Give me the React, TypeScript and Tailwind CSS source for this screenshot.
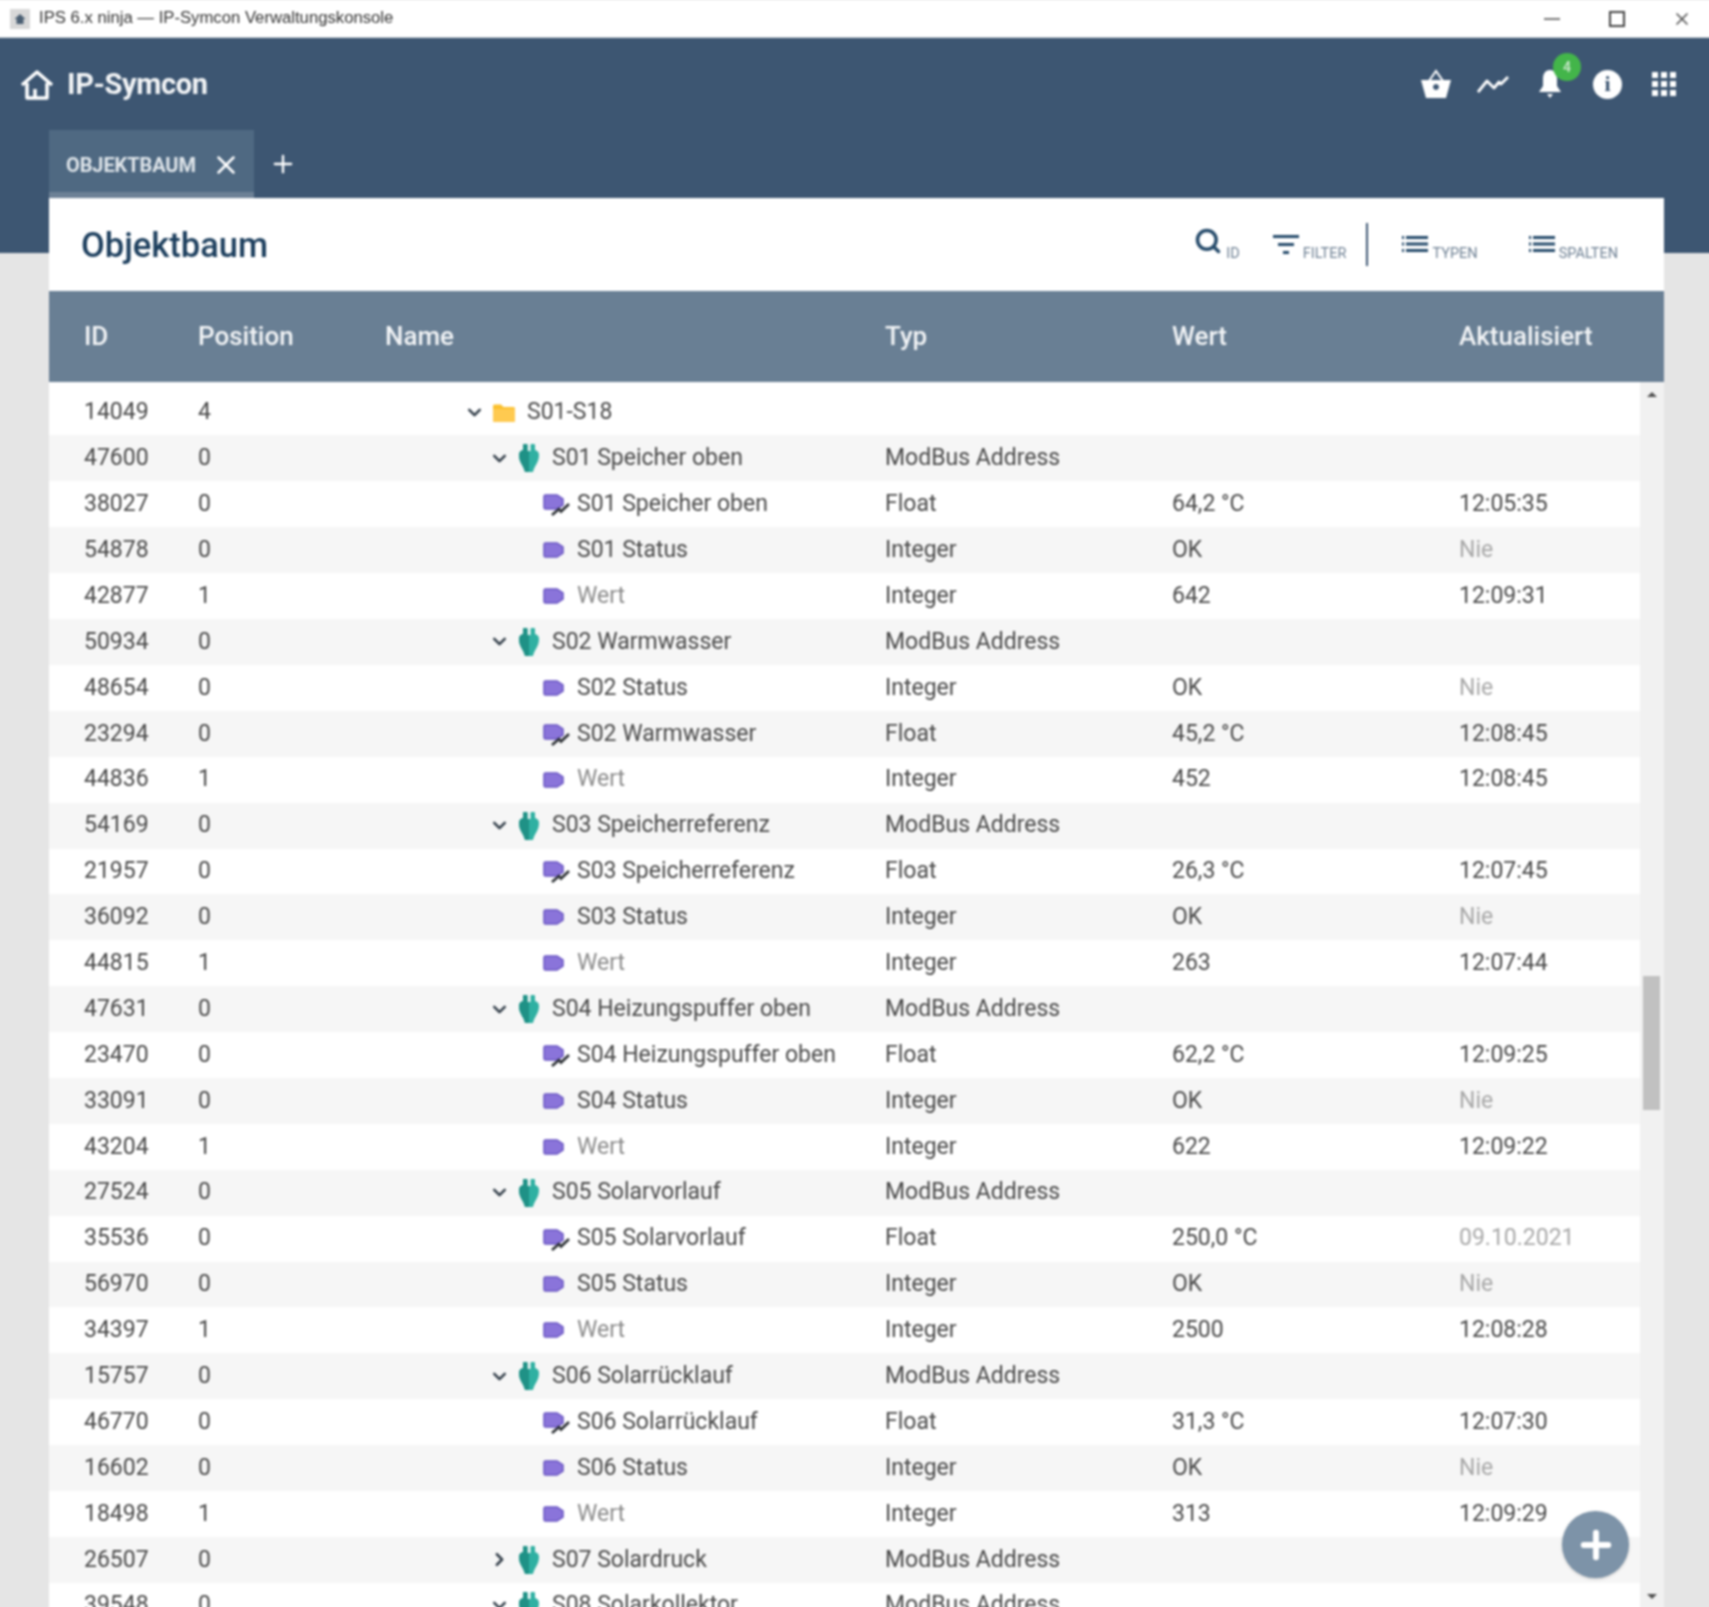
import React from "react";
import { ChevronDown, ChevronRight, X, Plus, Search } from "lucide-react";

type Row = { id: string; pos: string; lvl: 0 | 1 | 2; icon: "folder" | "mod" | "tag" | "var"; open?: boolean; name: string; typ?: string; wert?: string; upd?: string };

const rows: Row[] = [
  { id: "14049", pos: "4", lvl: 0, icon: "folder", open: true, name: "S01-S18" },
];
function group(id: string, name: string, open: boolean = true) {
  rows.push({ id, pos: "0", lvl: 1, icon: "mod", open, name, typ: "ModBus Address" });
}
function fl(id: string, name: string, wert: string, upd: string) {
  rows.push({ id, pos: "0", lvl: 2, icon: "var", name, typ: "Float", wert, upd });
}
function st(id: string, name: string) {
  rows.push({ id, pos: "0", lvl: 2, icon: "tag", name, typ: "Integer", wert: "OK", upd: "Nie" });
}
function we(id: string, wert: string, upd: string) {
  rows.push({ id, pos: "1", lvl: 2, icon: "tag", name: "Wert", typ: "Integer", wert, upd });
}
group("47600", "S01 Speicher oben"); fl("38027", "S01 Speicher oben", "64,2 °C", "12:05:35"); st("54878", "S01 Status"); we("42877", "642", "12:09:31");
group("50934", "S02 Warmwasser"); st("48654", "S02 Status"); fl("23294", "S02 Warmwasser", "45,2 °C", "12:08:45"); we("44836", "452", "12:08:45");
group("54169", "S03 Speicherreferenz"); fl("21957", "S03 Speicherreferenz", "26,3 °C", "12:07:45"); st("36092", "S03 Status"); we("44815", "263", "12:07:44");
group("47631", "S04 Heizungspuffer oben"); fl("23470", "S04 Heizungspuffer oben", "62,2 °C", "12:09:25"); st("33091", "S04 Status"); we("43204", "622", "12:09:22");
group("27524", "S05 Solarvorlauf"); fl("35536", "S05 Solarvorlauf", "250,0 °C", "09.10.2021"); st("56970", "S05 Status"); we("34397", "2500", "12:08:28");
group("15757", "S06 Solarrücklauf"); fl("46770", "S06 Solarrücklauf", "31,3 °C", "12:07:30"); st("16602", "S06 Status"); we("18498", "313", "12:09:29");
group("26507", "S07 Solardruck", false);
group("39548", "S08 Solarkollektor");

const lvlClass = { 0: "pl-[80px]", 1: "pl-[105px]", 2: "pl-[158px]" };

function FolderIcon() {
  return (
    <svg width="22" height="18" viewBox="0 0 22 18" className="shrink-0">
      <path d="M0 2 a1.5 1.5 0 0 1 1.5-1.5 H8 L10.5 3 H20.5 A1.5 1.5 0 0 1 22 4.5 V16.5 A1.5 1.5 0 0 1 20.5 18 H1.5 A1.5 1.5 0 0 1 0 16.5 Z" fill="#fbc02d" />
      <path d="M0 5 H22 V16.5 A1.5 1.5 0 0 1 20.5 18 H1.5 A1.5 1.5 0 0 1 0 16.5 Z" fill="#ffca50" />
    </svg>
  );
}
function ModIcon() {
  return (
    <svg width="22" height="28" viewBox="0 0 22 28" className="shrink-0">
      <path d="M5 1 Q5 0 6 0 H8.500 Q9.500 0 9.500 1 V7 H12.500 V1 Q12.500 0 13.500 0 H16 Q17 0 17 1 V6 Q21 7 21 11 C21 19 16 22 15 28 H7 C6 22 1 19 1 11 Q1 7 5 6 Z" fill="#2fb0a2" />
      <path d="M5 1 Q5 0 6 0 H8.500 Q9.500 0 9.500 1 V7 H11 V28 H7 C6 22 1 19 1 11 Q1 7 5 6 Z" fill="#1f9186" />
    </svg>
  );
}
function TagIcon() {
  return (
    <svg width="21" height="16" viewBox="0 0 21 16" className="shrink-0">
      <path d="M2.500 1 H14 L20 5 V11 L14 15 H2.500 A1.500 1.500 0 0 1 1 13.500 V2.500 A1.500 1.500 0 0 1 2.500 1 Z" fill="#8a74da" stroke="#6a55c2" strokeWidth="1.500" />
    </svg>
  );
}
function VarIcon() {
  return (
    <svg width="28" height="24" viewBox="0 0 28 24" className="shrink-0 -mr-[6px] translate-y-[2px]">
      <path d="M2.500 1 H14 L20 5 V11 L14 15 H2.500 A1.500 1.500 0 0 1 1 13.500 V2.500 A1.500 1.500 0 0 1 2.500 1 Z" fill="#8a74da" stroke="#6a55c2" strokeWidth="1.500" />
      <path d="M9 21 L16 15 L18 17.500 L26 10" fill="none" stroke="#2c3035" strokeWidth="2.600" />
    </svg>
  );
}
function ListIcon() {
  return (
    <svg width="26" height="16" viewBox="0 0 26 16" className="shrink-0">
      <path d="M0 0 H2 V3 H0 Z M0 6.500 H2 V9.500 H0 Z M0 13 H2 V16 H0 Z" fill="#264b6b" />
      <path d="M4 0 H26 V3 H4 Z M4 6.500 H26 V9.500 H4 Z M4 13 H26 V16 H4 Z" fill="#264b6b" />
    </svg>
  );
}

function Tool({ icon, label, cls }: { icon: React.ReactNode; label: string; cls: string }) {
  return (
    <div className={`flex items-start ${cls}`}>
      {icon}
      <span className="mt-[19px] ml-[4px] text-[14.5px] leading-[16px] text-[#6f8194]">{label}</span>
    </div>
  );
}

export default function App() {
  return (
    <div className="h-[1607px] overflow-hidden bg-[#e5e5e5]">
      <div className="-mx-[3px] h-[1615px] overflow-hidden bg-[#e5e5e5] font-['Roboto',sans-serif] blur-[0.8px]">
        {/* window title bar */}
        <div className="flex h-[38px] items-center bg-white pl-[13px] border-b border-[#c9d0d6]">
          <div className="flex h-[20px] w-[20px] items-center justify-center bg-[#d8d8d8]">
            <svg width="12" height="12" viewBox="0 0 24 24"><path d="M12 2 L23 12 H19 V22 H5 V12 H1 Z" fill="#4b5f73" /></svg>
          </div>
          <span className="ml-[9px] -mt-[1px] font-['Liberation_Sans',sans-serif] text-[16.7px] text-[#333]">IPS 6.x ninja — IP-Symcon Verwaltungskonsole</span>
          <div className="ml-auto flex items-center text-[#555]">
            <div className="mr-[49px] h-[2px] w-[16px] bg-[#777]" />
            <div className="mr-[47px] h-[16px] w-[16px] border-2 border-[#444]" />
            <X size={20} strokeWidth={2} className="mr-[20px]" />
          </div>
        </div>

        {/* app header */}
        <div className="h-[215px] bg-[#3d5672]">
          <div className="flex h-[92px] items-center pl-[23px]">
            <svg width="34" height="31" viewBox="0 0 34 31" fill="none" stroke="white" strokeWidth="3.500" strokeLinejoin="round">
              <path d="M2 16 L17 3 L32 16" />
              <path d="M7 14 V29 H15 V20 M27 14 V29 H15" />
            </svg>
            <span className="ml-[13px] mt-[1px] text-[29px] font-bold tracking-[-0.35px] text-[#f2f4f6]">IP-Symcon</span>
            <div className="ml-auto mr-[36px] flex items-center">
              <svg width="32" height="30" viewBox="0 0 32 30" className="-ml-[1px]">
                <path d="M1 11 H31 L26 29 H6 Z M16 15 a3 3 0 1 0 .01 0 Z" fill="white" fillRule="evenodd" />
                <path d="M9 12 L16 2 L23 12" fill="none" stroke="white" strokeWidth="2" />
              </svg>
              <svg width="32" height="20" viewBox="0 0 32 20" fill="none" stroke="white" strokeWidth="2.800" strokeLinejoin="round" className="ml-[25px]">
                <path d="M1 18 L10 7 L17 14 L22 8 L24 10 L31 3" />
              </svg>
              <div className="relative ml-[29px] w-[24px]">
                <svg width="24" height="30" viewBox="0 0 24 30">
                  <path d="M12 1 C7 1 5 5 5 10 V17 L1 23 H23 L19 17 V10 C19 5 17 1 12 1 Z" fill="white" />
                  <path d="M9 25 H15 L12 29 Z" fill="white" />
                </svg>
                <div className="absolute -top-[16px] left-[15px] flex h-[28px] w-[28px] items-center justify-center rounded-full bg-[#43b54a] text-[14px] font-medium text-[#cfe9cf]">4</div>
              </div>
              <div className="ml-[31px] flex h-[29px] w-[29px] items-center justify-center rounded-full bg-white font-['Liberation_Serif',serif] text-[22px] font-bold leading-none text-[#3d5672]">i</div>
              <div className="ml-[30px] grid grid-cols-3 gap-[3px]">
                {Array.from({ length: 9 }).map((_, i) => (
                  <div key={i} className="h-[6px] w-[6px] bg-white" />
                ))}
              </div>
            </div>
          </div>
          <div className="flex pl-[52px]">
            <div className="flex h-[68px] w-[205px] items-center border-b-[6px] border-[#6d8196] bg-[#4f6982] pl-[17px] pt-[8px]">
              <span className="text-[20px] font-bold text-[#dfe5ea] tracking-[-0.1px]">OBJEKTBAUM</span>
              <X size={30} strokeWidth={2} className="ml-[15px] text-white" />
            </div>
            <Plus size={28} strokeWidth={2} className="ml-[15px] mt-[20px] text-white" />
          </div>
        </div>

        {/* card */}
        <div className="relative mr-[48px] -mt-[55px] ml-[52px] bg-white">
          <div className="flex h-[93px] items-center pl-[32px]">
            <span className="mt-[3px] text-[34.5px] font-medium text-[#1d3f5e]">Objektbaum</span>
            <div className="ml-auto flex h-[44px] items-center self-center">
              <Tool cls="" label="ID" icon={<Search size={28} strokeWidth={3} className="text-[#264b6b]" />} />
              <Tool cls="ml-[33px]" label="FILTER" icon={
                <svg width="26" height="20" viewBox="0 0 26 20" className="mt-[8px]"><path d="M0 0 H26 V3 H0 Z M5 8 H21 V11 H5 Z M10 16 H16 V19 H10 Z" fill="#264b6b" /></svg>
              } />
              <div className="ml-[20px] h-[43px] w-[2px] bg-[#3d5672]" />
              <Tool cls="ml-[34px]" label="TYPEN" icon={<div className="mt-[9px]"><ListIcon /></div>} />
              <Tool cls="ml-[51px] mr-[46px]" label="SPALTEN" icon={<div className="mt-[9px]"><ListIcon /></div>} />
            </div>
          </div>
          <div className="grid h-[91px] grid-cols-[114px_187px_500px_287px_287px_1fr] items-center bg-[#697f94] pl-[35px] text-[26px] font-medium text-[#f2f4f6]">
            <span>ID</span><span>Position</span><span>Name</span><span>Typ</span><span>Wert</span><span>Aktualisiert</span>
          </div>
          <div className="relative flex">
            <div className="min-w-0 flex-1 pt-[7.6px]">
              {rows.map((r, i) => (
                <div key={r.id} className={`grid h-[45.9px] grid-cols-[114px_187px_500px_287px_287px_1fr] items-center pl-[35px] text-[23px] text-[#4a4a4a] ${i % 2 === 1 ? "bg-[#f6f6f6]" : "bg-white"}`}>
                  <span>{r.id}</span>
                  <span>{r.pos}</span>
                  <div className={`flex items-center ${lvlClass[r.lvl]}`}>
                    {r.lvl < 2 && (
                      <span className="flex w-[22px] shrink-0 -translate-x-[2px] justify-center">
                        {r.open ? <ChevronDown size={21} strokeWidth={3} className="text-[#37424d]" /> : <ChevronRight size={21} strokeWidth={3} className="text-[#37424d]" />}
                      </span>
                    )}
                    <span className={`flex items-center ${r.lvl < 2 ? "ml-[6px]" : ""} w-[22px] shrink-0`}>
                      {r.icon === "folder" && <FolderIcon />}
                      {r.icon === "mod" && <ModIcon />}
                      {r.icon === "tag" && <TagIcon />}
                      {r.icon === "var" && <VarIcon />}
                    </span>
                    <span className={`ml-[12px] whitespace-nowrap ${r.name === "Wert" ? "text-[#8c8c8c]" : ""}`}>{r.name}</span>
                  </div>
                  <span>{r.typ}</span>
                  <span>{r.wert}</span>
                  <span className={r.upd === "Nie" || r.upd === "09.10.2021" ? "text-[#a8a8a8]" : ""}>{r.upd}</span>
                </div>
              ))}
            </div>
            <div className="relative w-[24px] shrink-0 bg-[#f1f1f1]">
              <div className="absolute left-[12px] top-[10px] h-0 w-0 -translate-x-1/2 border-x-[5px] border-b-[5px] border-x-transparent border-b-[#505050]" />
              <div className="absolute left-[3px] top-[594px] h-[134px] w-[17px] bg-[#c1c1c1]" />
              <div className="absolute left-[12px] top-[1212px] h-0 w-0 -translate-x-1/2 border-x-[5px] border-t-[5px] border-x-transparent border-t-[#505050]" />
            </div>
            <div className="absolute left-[1513px] top-[1129px] flex h-[67px] w-[67px] items-center justify-center rounded-full bg-[#7d93a8] shadow-[0_1px_3px_rgba(0,0,0,0.2)]">
              <Plus size={42} strokeWidth={3.4} className="text-white" />
            </div>
          </div>
        </div>
      </div>
    </div>
  );
}
